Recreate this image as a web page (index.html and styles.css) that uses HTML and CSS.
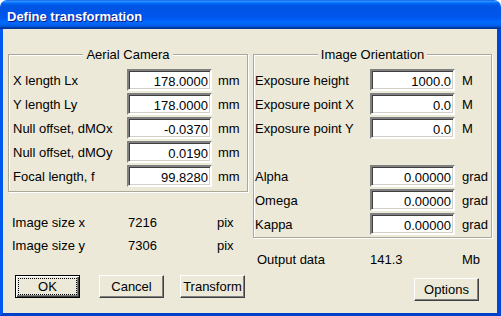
FILE: index.html
```html
<!DOCTYPE html>
<html lang="en">
<head>
<meta charset="utf-8">
<title>Define transformation</title>
<link rel="stylesheet" href="styles.css">
</head>
<body>
<div class="window">
  <div class="titlebar"><span class="title">Define transformation</span></div>
  <div class="frame">
    <div class="client">
      <div class="col col-left">
        <div class="group group-camera">
          <div class="group-title"><span>Aerial Camera</span></div>
          <div class="form form-camera">
            <span class="label">X length Lx</span><div class="field">178.0000</div><span class="unit">mm</span>
            <span class="label">Y length Ly</span><div class="field">178.0000</div><span class="unit">mm</span>
            <span class="label">Null offset, dMOx</span><div class="field">-0.0370</div><span class="unit">mm</span>
            <span class="label">Null offset, dMOy</span><div class="field">0.0190</div><span class="unit">mm</span>
            <span class="label">Focal length, f</span><div class="field">99.8280</div><span class="unit">mm</span>
          </div>
        </div>
        <div class="info info-left">
          <span>Image size x</span><span>7216</span><span>pix</span>
          <span>Image size y</span><span>7306</span><span>pix</span>
        </div>
        <div class="buttons">
          <button class="btn btn-default">OK</button>
          <button class="btn btn-cancel">Cancel</button>
          <button class="btn btn-transform">Transform</button>
        </div>
      </div>
      <div class="col col-right">
        <div class="group group-orient">
          <div class="group-title"><span>Image Orientation</span></div>
          <div class="form form-orient">
            <span class="label">Exposure height</span><div class="field">1000.0</div><span class="unit">M</span>
            <span class="label">Exposure point X</span><div class="field">0.0</div><span class="unit">M</span>
            <span class="label">Exposure point Y</span><div class="field">0.0</div><span class="unit">M</span>
          </div>
          <div class="form form-orient form-angles">
            <span class="label">Alpha</span><div class="field">0.00000</div><span class="unit">grad</span>
            <span class="label">Omega</span><div class="field">0.00000</div><span class="unit">grad</span>
            <span class="label">Kappa</span><div class="field">0.00000</div><span class="unit">grad</span>
          </div>
        </div>
        <div class="info info-right">
          <span>Output data</span><span>141.3</span><span>Mb</span>
        </div>
        <button class="btn btn-options">Options</button>
      </div>
    </div>
  </div>
</div>
</body>
</html>
```

FILE: styles.css
```css
html, body {
  margin: 0;
  padding: 0;
  background: #ffffff;
}

body {
  font-family: "Liberation Sans", Arial, sans-serif;
  font-size: 13px;
  color: #000;
}

.window {
  width: 501px;
  height: 316px;
  display: flex;
  flex-direction: column;
}

.titlebar {
  height: 29px;
  box-sizing: border-box;
  padding: 4px 0 0 7px;
  border-radius: 7px 7px 0 0;
  background: linear-gradient(to bottom,
    #0058ee 0%, #3593ff 4%, #288eff 6%, #127dff 8%, #036ffc 10%,
    #0262ee 14%, #0057e5 20%, #0054e3 24%, #0055eb 56%, #005bf5 66%,
    #026afe 76%, #0062ef 86%, #0052d6 92%, #0040ab 94%, #003092 100%);
}

.title {
  display: block;
  font-weight: bold;
  font-size: 13px;
  line-height: 25px;
  color: #fff;
  text-shadow: 1px 1px 0 #0a1883;
}

.frame {
  flex: 1;
  display: flex;
  border-style: solid;
  border-width: 0 4px 3px 3px;
  border-color: #0055ea #0046d5 #0040c8 #0058ee;
}

.client {
  flex: 1;
  display: flex;
  gap: 5px;
  padding: 25px 5px 0 5px;
  background: #ece9d8;
}

.col {
  display: flex;
  flex-direction: column;
}

.col-left { width: 240px; }
.col-right { width: 239px; }

.group {
  position: relative;
  border: 1px solid #aca899;
  box-shadow: inset 1px 1px 0 #fff, 1px 1px 0 #fff;
  padding-top: 14px;
}

.group-camera { padding-bottom: 4px; }
.group-orient { padding-bottom: 2px; }

.group-title {
  position: absolute;
  top: -8px;
  left: 0;
  right: 0;
  text-align: center;
  line-height: 15px;
}

.group-title span {
  background: #ece9d8;
  padding: 0 3px;
}

.form {
  display: grid;
  grid-auto-rows: 22px;
  row-gap: 2px;
  align-items: center;
}

.form-camera {
  padding-left: 4px;
  grid-template-columns: 114px 85px 1fr;
}

.form-orient {
  padding-left: 1px;
  grid-template-columns: 115px 85px 1fr;
}

.form-angles { margin-top: 26px; }

.label, .unit {
  line-height: 15px;
  white-space: nowrap;
}

.form-camera .unit { padding-left: 6px; }
.form-orient .unit { padding-left: 7px; }

.field {
  align-self: stretch;
  box-sizing: border-box;
  height: 22px;
  padding: 3px 2px 0 0;
  line-height: 15px;
  text-align: right;
  background: #fff;
  border: 2px solid;
  border-color: #808080 #fff #fff #808080;
  box-shadow: inset 1px 1px 0 #404040, inset -1px -1px 0 #d4d0c8;
}

.info {
  display: grid;
  row-gap: 8px;
  line-height: 15px;
  white-space: nowrap;
}

.info-left {
  margin-top: 23px;
  padding-left: 4px;
  grid-template-columns: 116px 89px auto;
}

.info-right {
  margin-top: 14px;
  padding-left: 4px;
  grid-template-columns: 113px 92px auto;
}

.buttons {
  display: flex;
  margin-top: 22px;
}

.btn {
  width: 65px;
  height: 23px;
  box-sizing: border-box;
  padding: 0;
  font-family: inherit;
  font-size: 13px;
  line-height: 15px;
  color: #000;
  background: #ece9d8;
  border: 1px solid;
  border-color: #fff #404040 #404040 #fff;
  box-shadow: inset -1px -1px 0 #808080;
}

.btn-default {
  margin-left: 7px;
  border-color: #000;
  box-shadow: inset 1px 1px 0 #fff, inset -1px -1px 0 #404040, inset -2px -2px 0 #808080;
  outline: 1px dotted #000;
  outline-offset: -4px;
}

.btn-cancel { margin-left: 19px; }
.btn-transform { margin-left: 16px; }

.btn-options {
  align-self: flex-end;
  margin-top: 11px;
  margin-right: 13px;
}
```
